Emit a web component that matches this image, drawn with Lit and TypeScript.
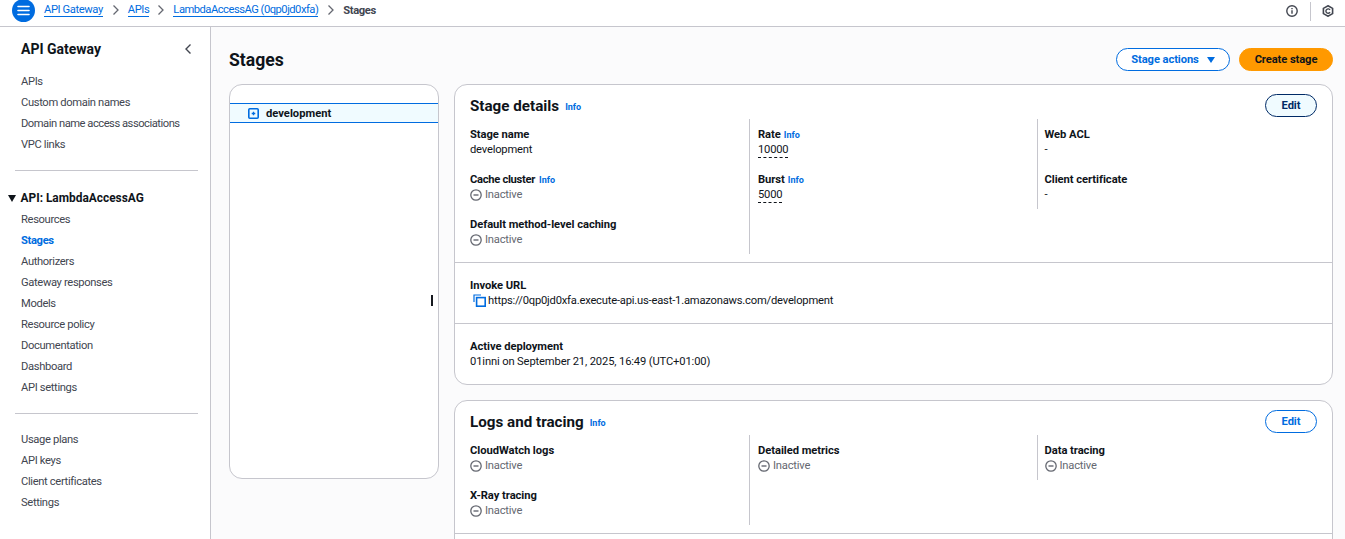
import { LitElement, html, css } from "lit";
import { customElement } from "lit/decorators.js";

const minus = html`<svg class="st" viewBox="0 0 12 12" width="12" height="12"><circle cx="6" cy="6" r="5.2" fill="none" stroke="#656871" stroke-width="1.3"/><path d="M3.5 6h5" stroke="#656871" stroke-width="1.4"/></svg>`;
const inactive = html`<div class="val inactive">${minus}<span>Inactive</span></div>`;
const info = html`<a class="info">Info</a>`;
const chev = html`<svg class="chev" viewBox="0 0 8 12" width="8" height="12"><path d="M1.5 1.5 6 6l-4.5 4.5" fill="none" stroke="#656871" stroke-width="1.3"/></svg>`;

@customElement("app-root")
export class AppRoot extends LitElement {
  static styles = css`
    :host { display: block; height: 539px; overflow: hidden; position: relative; background: #fff; color: #0f141a;
      font-family: Roboto, "Liberation Sans", sans-serif; font-size: 11.2px; line-height: 15px; letter-spacing: -0.2px; }
    a { color: inherit; text-decoration: none; }
    .top { height: 26px; border-bottom: 1px solid #c6c6cd; display: flex; align-items: center; overflow: hidden; padding: 0 0 0 12px; box-sizing: content-box; }
    .burger { width: 23px; height: 23px; flex: none; border-radius: 50%; background: #006ce0; margin: -5px 9px 0 0; display: flex; align-items: center; justify-content: center; }
    .crumbs { display: flex; align-items: center; flex: 1; margin-top: -6px; letter-spacing: -0.4px; }
    .crumbs a { color: #006ce0; border-bottom: 1px solid #006ce0; line-height: 13px; }
    .crumbs a:first-child { margin-right: 1px; }
    .crumbs a.long { letter-spacing: -0.5px; margin-right: 1px; }
    .crumbs .chev { margin: 0 8px 0 8px; }
    .crumbs .cur { color: #424650; font-weight: 700; }
    .topicons { display: flex; align-items: center; margin-top: -4px; }
    .sep { width: 1px; height: 19px; background: #c6c6cd; margin: 0 11px 0 12px; }
    .ti { display: block; margin-right: 11px; }
    .body { display: flex; height: 512px; }
    .side { width: 210px; flex: none; border-right: 1px solid #c6c6cd; box-sizing: content-box; padding-top: 13px; }
    .sidehead { display: flex; justify-content: space-between; align-items: center; padding: 0 18px 0 21px; height: 18px; font-size: 14px; font-weight: 700; letter-spacing: 0; margin-bottom: 13px; }
    .nav { color: #424650; line-height: 21px; padding-left: 21px; letter-spacing: -0.35px; }
    .nav div { height: 21px; }
    .nav .on { color: #006ce0; font-weight: 700; }
    .nav .tight { letter-spacing: -0.48px; }
    .nav.tail { margin-top: -2px; }
    hr { border: 0; border-top: 1px solid #c6c6cd; margin: 15px 12px 17px 15px; }
    .sec { display: flex; align-items: center; height: 21px; font-weight: 700; font-size: 11.9px; padding-left: 8px; gap: 4.5px; letter-spacing: 0; }
    .sec i { width: 0; height: 0; border-left: 4.5px solid transparent; border-right: 4.5px solid transparent; border-top: 7px solid #0f141a; }
    .main { flex: 1; min-width: 0; background: #fbfbfc; padding: 0 12px 0 18px; }
    .pagehead { height: 57px; display: flex; align-items: center; justify-content: space-between; }
    h1 { margin: 0; font-size: 17.6px; font-weight: 700; line-height: 22px; margin-top: 9px; letter-spacing: 0; }
    .acts { display: flex; gap: 9px; margin-top: 8px; }
    .btn { height: 23px; box-sizing: border-box; border-radius: 12px; display: flex; align-items: center; justify-content: center; font-weight: 700; font-size: 11.2px; letter-spacing: -0.1px; border: 1px solid #006ce0; color: #006ce0; background: #fff; }
    .sa { width: 114px; gap: 8px; }
    .sa i { width: 0; height: 0; border-left: 4.5px solid transparent; border-right: 4.5px solid transparent; border-top: 6px solid #006ce0; }
    .cs { width: 94px; background: #ff9900; border-color: #ff9900; color: #0f141a; }
    .edit { width: 52px; flex: none; }
    .edit.dark { background: #f0fbff; border-color: #002a66; color: #002a66; }
    .cols { display: flex; gap: 15px; align-items: flex-start; }
    .tree { width: 210px; height: 395px; flex: none; box-sizing: border-box; background: #fff; border: 1px solid #c6c6cd; border-radius: 13px; padding-top: 18px; }
    .row { height: 20px; box-sizing: border-box; border-top: 1px solid #006ce0; border-bottom: 1px solid #006ce0; background: #f0fbff; display: flex; align-items: center; padding-left: 18px; gap: 7px; font-weight: 700; letter-spacing: 0; }
    .stack { flex: 1; display: flex; flex-direction: column; gap: 15px; min-width: 0; }
    .card { background: #fff; border: 1px solid #c6c6cd; border-radius: 13px; }
    .chead { display: flex; align-items: center; justify-content: space-between; padding: 9px 15px 0 15px; height: 23px; box-sizing: content-box; }
    h2 { margin: 0; font-size: 15.2px; font-weight: 700; line-height: 18px; letter-spacing: 0; display: flex; align-items: center; padding-top: 1px; }
    h2 .info { margin-left: 6px; margin-top: 2px; }
    .info { color: #006ce0; font-size: 9px; font-weight: 700; letter-spacing: 0; }
    .grid { display: flex; align-items: flex-start; padding-left: 15px; margin-top: 2px; }
    .col { width: 287.5px; box-sizing: border-box; flex: none; }
    .col + .col { padding-left: 8px; }
    .col + .col + .col { padding-left: 7px; }
    .col.rule { border-right: 1px solid #c6c6cd; }
    .col:first-child { width: 280px; }
    .item { height: 45px; padding-top: 8px; box-sizing: border-box; }
    .label { font-weight: 700; height: 15px; display: flex; gap: 3px; align-items: baseline; letter-spacing: -0.05px; }
    .label.cc { letter-spacing: -0.3px; gap: 4px; }
    .val { height: 15px; color: #0f141a; }
    .val.wide { letter-spacing: -0.14px; }
    .val.inactive { color: #656871; display: flex; align-items: center; gap: 3px; }
    .dash { border-bottom: 1px dashed #0f141a; display: inline-block; line-height: 14px; }
    .st { display: block; }
    .spacer { height: 8px; }
    .block { border-top: 1px solid #c6c6cd; padding: 15px 15px 15px; height: 61px; box-sizing: border-box; }
    .url { display: flex; align-items: center; gap: 2px; padding-left: 3px; }
    .cursor { position: absolute; left: 431px; top: 295px; width: 1.5px; height: 11px; background: #16191f; }
  `;

  render() {
    return html`
      <header class="top">
        <div class="burger"><svg width="13" height="11" viewBox="0 0 13 11"><path d="M1 1.5h11M1 5.5h11M1 9.5h11" stroke="#fff" stroke-width="1.6" stroke-linecap="round"/></svg></div>
        <nav class="crumbs"><a>API Gateway</a>${chev}<a>APIs</a>${chev}<a class="long">LambdaAccessAG (0qp0jd0xfa)</a>${chev}<span class="cur">Stages</span></nav>
        <div class="topicons">
          <svg width="12" height="12" viewBox="0 0 12 12"><circle cx="6" cy="6" r="5.2" fill="none" stroke="#424650" stroke-width="1.4"/><path d="M6 5.2v3.6M6 3v1.3" stroke="#424650" stroke-width="1.4"/></svg>
          <div class="sep"></div>
          <svg class="ti" width="12" height="12" viewBox="0 0 12 12"><path d="M6 .8l4.6 2.6v5.2L6 11.2 1.4 8.6V3.4z" fill="none" stroke="#424650" stroke-width="1.6"/><path d="M8 5A2.2 2.2 0 1 0 8 7.2" fill="none" stroke="#424650" stroke-width="1.4"/></svg>
        </div>
      </header>
      <div class="body">
        <aside class="side">
          <div class="sidehead"><span>API Gateway</span><svg width="8" height="12" viewBox="0 0 8 12"><path d="M6.5 1.5 2 6l4.5 4.5" fill="none" stroke="#424650" stroke-width="1.4"/></svg></div>
          <div class="nav"><div>APIs</div><div>Custom domain names</div><div class="tight">Domain name access associations</div><div>VPC links</div></div>
          <hr />
          <div class="sec"><i></i><span>API: LambdaAccessAG</span></div>
          <div class="nav"><div>Resources</div><div class="on">Stages</div><div>Authorizers</div><div>Gateway responses</div><div>Models</div><div>Resource policy</div><div>Documentation</div><div>Dashboard</div><div>API settings</div></div>
          <hr />
          <div class="nav tail"><div>Usage plans</div><div>API keys</div><div>Client certificates</div><div>Settings</div></div>
        </aside>
        <main class="main">
          <div class="pagehead"><h1>Stages</h1>
            <div class="acts"><div class="btn sa">Stage actions <i></i></div><div class="btn cs">Create stage</div></div>
          </div>
          <div class="cols">
            <div class="tree"><div class="row">
              <svg width="11" height="11" viewBox="0 0 11 11"><rect x=".8" y=".8" width="9.4" height="9.4" rx="1" fill="none" stroke="#006ce0" stroke-width="1.6"/><path d="M3.7 5.5h3.6M5.5 3.7v3.6" stroke="#006ce0" stroke-width="1.3"/></svg>
              <span>development</span></div></div>
            <div class="stack">
              <section class="card">
                <div class="chead"><h2>Stage details ${info}</h2><div class="btn edit dark">Edit</div></div>
                <div class="grid">
                  <div class="col rule">
                    <div class="item"><div class="label">Stage name</div><div class="val">development</div></div>
                    <div class="item"><div class="label cc">Cache cluster ${info}</div>${inactive}</div>
                    <div class="item"><div class="label">Default method-level caching</div>${inactive}</div>
                  </div>
                  <div class="col rule">
                    <div class="item"><div class="label">Rate ${info}</div><div class="val"><span class="dash">10000</span></div></div>
                    <div class="item"><div class="label">Burst ${info}</div><div class="val"><span class="dash">5000</span></div></div>
                  </div>
                  <div class="col">
                    <div class="item"><div class="label">Web ACL</div><div class="val">-</div></div>
                    <div class="item"><div class="label">Client certificate</div><div class="val">-</div></div>
                  </div>
                </div>
                <div class="spacer"></div>
                <div class="block"><div class="label">Invoke URL</div>
                  <div class="val url"><svg width="13" height="13" viewBox="0 0 13 13"><path d="M1 8V1h7" fill="none" stroke="#006ce0" stroke-width="1.2"/><rect x="3.6" y="3.6" width="8.6" height="8.6" fill="none" stroke="#006ce0" stroke-width="1.6"/></svg><span>https://0qp0jd0xfa.execute-api.us-east-1.amazonaws.com/development</span></div></div>
                <div class="block"><div class="label">Active deployment</div><div class="val wide">01inni on September 21, 2025, 16:49 (UTC+01:00)</div></div>
              </section>
              <section class="card">
                <div class="chead"><h2>Logs and tracing ${info}</h2><div class="btn edit">Edit</div></div>
                <div class="grid">
                  <div class="col rule">
                    <div class="item"><div class="label">CloudWatch logs</div>${inactive}</div>
                    <div class="item"><div class="label">X-Ray tracing</div>${inactive}</div>
                  </div>
                  <div class="col rule"><div class="item"><div class="label">Detailed metrics</div>${inactive}</div></div>
                  <div class="col"><div class="item"><div class="label">Data tracing</div>${inactive}</div></div>
                </div>
                <div class="spacer"></div>
                <div class="block"></div>
              </section>
            </div>
          </div>
        </main>
      </div>
      <div class="cursor"></div>
    `;
  }
}
